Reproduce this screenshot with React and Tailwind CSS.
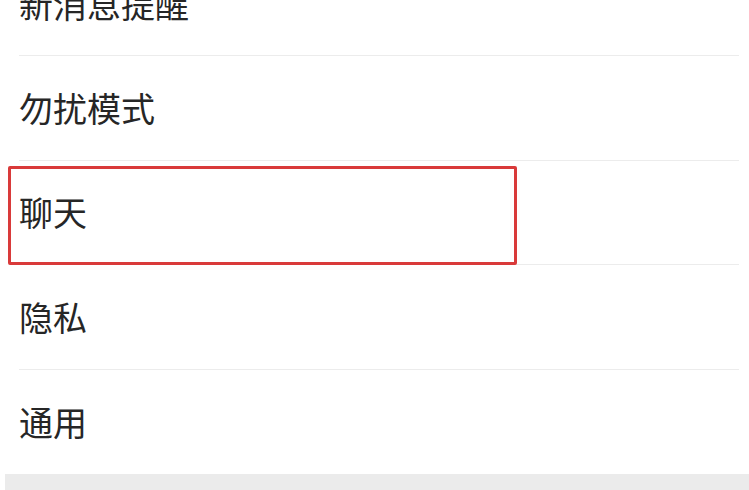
const ROWS = ['新消息提醒', '勿扰模式', '聊天', '隐私', '通用']

function Row({ label, highlighted, last }) {
  return (
    <div className="relative h-[104.4px] shrink-0 flex">
      <div
        className={`flex-1 ml-[19px] mr-[10px] flex items-center ${last ? '' : 'border-b border-[#ececec]'}`}
      >
        <span className="text-[34px] leading-none text-[#262626]">{label}</span>
      </div>
      {/* red highlight frame */}
      {highlighted && (
        <div className="absolute left-[8px] top-[5px] w-[509px] h-[99px] border-[3px] border-[#d93a3a] rounded-[2px] pointer-events-none" />
      )}
    </div>
  )
}

export default function App() {
  return (
    <div
      className="w-[749px] h-[490px] overflow-hidden bg-white flex flex-col"
      style={{ fontFamily: '"Noto Sans CJK SC", "Noto Sans", sans-serif' }}
    >
      <div className="flex flex-col mt-[-48px]">
        {ROWS.map((r, i) => (
          <Row key={r} label={r} highlighted={r === '聊天'} last={i === ROWS.length - 1} />
        ))}
      </div>
      <div className="flex-1 ml-[5px] bg-[#ebebeb]" />
    </div>
  )
}
